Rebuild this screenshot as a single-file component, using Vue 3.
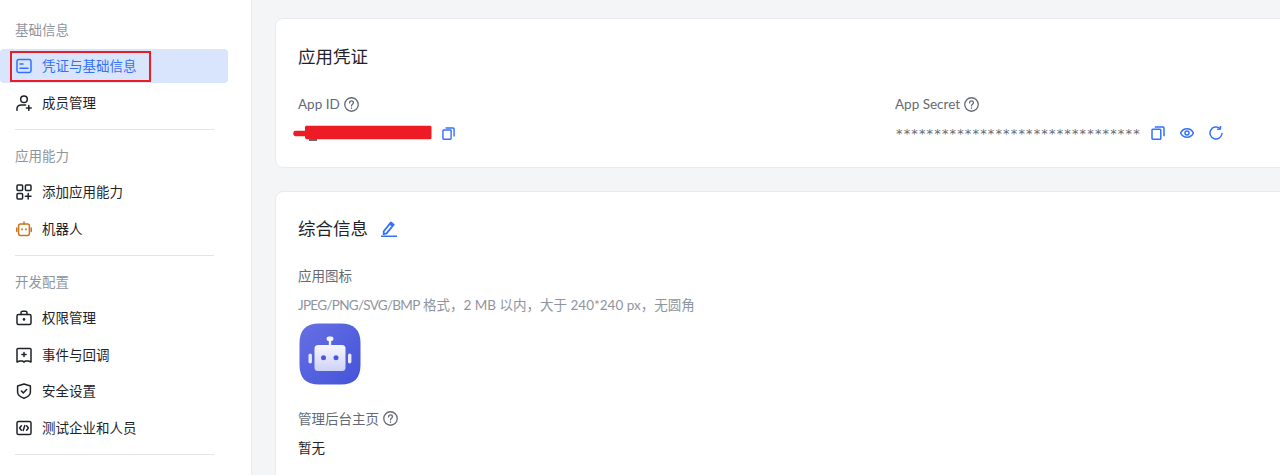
<script setup>
const groups = [
  { title: '基础信息', items: [
    { text: '凭证与基础信息', icon: 'card', active: true },
    { text: '成员管理', icon: 'member' },
  ]},
  { title: '应用能力', items: [
    { text: '添加应用能力', icon: 'apps' },
    { text: '机器人', icon: 'bot' },
  ]},
  { title: '开发配置', items: [
    { text: '权限管理', icon: 'lock' },
    { text: '事件与回调', icon: 'event' },
    { text: '安全设置', icon: 'shield' },
    { text: '测试企业和人员', icon: 'code' },
  ]},
]
</script>

<template>
  <div class="page">
    <aside class="side">
      <section v-for="g in groups" :key="g.title" class="group">
        <div class="group-title">{{ g.title }}</div>
        <div class="items">
          <div v-for="it in g.items" :key="it.text" class="item" :class="{ active: it.active }">
            <svg class="ico" :class="{ orange: it.icon === 'bot' }" viewBox="0 0 16 16" fill="none" stroke="currentColor" stroke-width="1.5" stroke-linejoin="round" stroke-linecap="round">
              <template v-if="it.icon === 'card'">
                <rect x="1" y="1.6" width="14" height="12.8" rx="1.6" />
                <path d="M4 6h3M4 10.300h8" />
              </template>
              <template v-else-if="it.icon === 'member'">
                <circle cx="8" cy="4.300" r="3.300" />
                <path d="M1 15.300v-1.500C1 11.400 3 10 5.400 10h4.200M12.800 10.600v4.800M10.400 13h4.800" />
              </template>
              <template v-else-if="it.icon === 'apps'">
                <rect x="1" y="1" width="5.600" height="5.600" rx="1" />
                <rect x="9.400" y="1" width="5.600" height="5.600" rx="1" />
                <rect x="1" y="9.400" width="5.600" height="5.600" rx="1" />
                <path d="M12.200 9.400v5.600M9.400 12.200h5.600" />
              </template>
              <template v-else-if="it.icon === 'bot'">
                <rect x="2.600" y="3" width="10.800" height="11.400" rx="2" />
                <path d="M8 1v2M.8 7v3.600M15.200 7v3.600" />
                <path d="M6 8.200v.4M10 8.200v.4" stroke-width="1.700" />
              </template>
              <template v-else-if="it.icon === 'lock'">
                <rect x="1" y="4.600" width="14" height="10" rx="1.500" />
                <path d="M5 4.600V2.800C5 1.900 5.700 1.200 6.600 1.200h2.800c.9 0 1.600.7 1.600 1.600v1.800" />
                <circle cx="8" cy="9.400" r=".6" fill="currentColor" />
              </template>
              <template v-else-if="it.icon === 'event'">
                <path d="M1 2.400C1 1.900 1.500 1.400 2 1.400h12c.5 0 1 .5 1 1V15l-2.600-1H9.600L8 15l-1.600-1H3.600L1 15z" />
                <path d="M8 5.400v4.200M5.900 7.500h4.200" />
              </template>
              <template v-else-if="it.icon === 'shield'">
                <path d="M8 1l6.400 2v6.200c0 3-3.600 5-6.400 6-2.800-1-6.400-3-6.400-6V3z" />
                <path d="M5.400 8l1.900 1.900 3.300-3.400" />
              </template>
              <template v-else>
                <rect x="1" y="1.400" width="14" height="13.200" rx="1.600" />
                <path d="M5.400 5.800L3.600 8l1.800 2.200M10.600 5.800L12.400 8l-1.800 2.200M8.800 5.600L7.200 10.400" />
              </template>
            </svg>
            <span class="item-text">{{ it.text }}</span>
          </div>
        </div>
        <div class="rule"></div>
      </section>
      <div class="annot"></div>
    </aside>

    <main class="main">
      <section class="card cred">
        <h2>应用凭证</h2>
        <div class="cols">
          <div class="col">
            <div class="label">App ID
              <svg class="help" viewBox="0 0 14 14" fill="none" stroke="currentColor" stroke-width="1.2" stroke-linecap="round"><circle cx="7" cy="7" r="6.300" /><path d="M5.200 5.500C5.200 4.400 6 3.700 7 3.700s1.800.7 1.800 1.700c0 1.400-1.800 1.400-1.800 2.900" /><path d="M7 10.200v.3" /></svg>
            </div>
            <div class="value">
              <svg class="scrib" width="140" height="17" viewBox="-2 0 140 17">
                <rect x="15" y="13" width="8" height="3" fill="#646a73" />
                <path fill="#ed1c24" d="M11 2.500C11 1 12 .8 13 .8h123c1 0 1.500.7 1.500 1.700v10c0 1-.5 1.700-1.500 1.700H13c-1 0-2-.7-2-1.700v-1.300H1.500C-1.500 11.200-1.500 5.800 1.500 5.800H11z" />
              </svg>
              <svg class="act" viewBox="0 0 14 14" fill="none" stroke="currentColor" stroke-width="1.500" stroke-linejoin="round"><rect x="1" y="3.300" width="8.800" height="9.900" rx=".8" /><path d="M3.800 1h8.200c.6 0 1 .4 1 1v8.300" /></svg>
            </div>
          </div>
          <div class="col">
            <div class="label">App Secret
              <svg class="help" viewBox="0 0 14 14" fill="none" stroke="currentColor" stroke-width="1.2" stroke-linecap="round"><circle cx="7" cy="7" r="6.300" /><path d="M5.200 5.500C5.200 4.400 6 3.700 7 3.700s1.800.7 1.800 1.700c0 1.400-1.800 1.400-1.800 2.900" /><path d="M7 10.200v.3" /></svg>
            </div>
            <div class="value secret">
              <span class="stars">********************************</span>
              <svg class="act" viewBox="0 0 14 14" fill="none" stroke="currentColor" stroke-width="1.500" stroke-linejoin="round"><rect x="1" y="3.300" width="8.800" height="9.900" rx=".8" /><path d="M3.800 1h8.200c.6 0 1 .4 1 1v8.300" /></svg>
              <svg class="act" viewBox="0 0 14 14" fill="none" stroke="currentColor" stroke-width="1.500"><path d="M.6 7C2 4.200 4.300 2.800 7 2.800s5 1.400 6.400 4.200c-1.400 2.800-3.700 4.200-6.400 4.200S2 9.800.6 7z" /><circle cx="7" cy="7" r="2" /></svg>
              <svg class="act" viewBox="0 0 14 14" fill="none" stroke="currentColor" stroke-width="1.500" stroke-linecap="round" stroke-linejoin="round"><path d="M13 7.500A6 6 0 1 1 11 2.500" /><path d="M11.500 .4L11.300 3.100 8.600 3.200" /></svg>
            </div>
          </div>
        </div>
      </section>

      <section class="card info">
        <h2 class="info-title">综合信息
          <svg class="edit" viewBox="0 0 16 16" fill="none" stroke="currentColor" stroke-width="1.800" stroke-linejoin="round" stroke-linecap="round"><path d="M2.800 10.300L9.900 1.400l2.800 2.200-7.100 8.800-3 .8zM8.800 2.800l2.800 2.200" /><path d="M.3 15.300h15.400" /></svg>
        </h2>
        <div class="label plain">应用图标</div>
        <div class="hint"><span class="hint-fmt">JPEG/PNG/SVG/BMP</span> 格式，2 MB 以内，大于 240*240 px，无圆角</div>
        <div class="logo">
          <svg width="62" height="62" viewBox="0 0 62 62">
            <defs>
              <linearGradient id="lg" x1="0" y1="0" x2="1" y2="1"><stop offset="0" stop-color="#6670e4" /><stop offset="1" stop-color="#4453d8" /></linearGradient>
              <linearGradient id="lf" x1="0" y1="0" x2="0" y2="1"><stop offset="0" stop-color="#f6f7fe" /><stop offset="1" stop-color="#cdd2f7" /></linearGradient>
            </defs>
            <path fill="url(#lg)" d="M20 .5h22c13 0 19.500 6.500 19.500 19.500v22c0 13-6.500 19.500-19.500 19.500H20C7 61.500 .5 55 .5 42V20C.5 7 7 .5 20 .5z" />
            <rect x="15.500" y="22" width="31" height="26" rx="3.500" fill="url(#lf)" />
            <rect x="29.800" y="16" width="2.400" height="7" fill="#eef0fd" />
            <rect x="27.500" y="13.500" width="7" height="4.500" rx="2.200" fill="#f3f4fe" />
            <rect x="9.500" y="30.500" width="3.400" height="10" rx="1.700" fill="#e8eafb" />
            <rect x="49" y="30.500" width="3.400" height="10" rx="1.700" fill="#e8eafb" />
            <circle cx="24.500" cy="34.800" r="2.500" fill="#4a59dc" />
            <circle cx="37" cy="34.800" r="2.500" fill="#4a59dc" />
          </svg>
        </div>
        <div class="label home">管理后台主页
          <svg class="help" viewBox="0 0 14 14" fill="none" stroke="currentColor" stroke-width="1.2" stroke-linecap="round"><circle cx="7" cy="7" r="6.300" /><path d="M5.200 5.500C5.200 4.400 6 3.700 7 3.700s1.800.7 1.800 1.700c0 1.400-1.800 1.400-1.800 2.900" /><path d="M7 10.200v.3" /></svg>
        </div>
        <div class="none">暂无</div>
      </section>
    </main>
  </div>
</template>

<style>
html, body { margin: 0; overflow: hidden; background: #f4f5f6; }
</style>

<style scoped>
.page {
  display: flex;
  width: 1280px;
  height: 475px;
  overflow: hidden;
  font-family: Lato, "Noto Sans CJK SC", sans-serif;
  font-size: 13.5px;
  color: #1f2329;
  background: #f4f5f7;
}
.side {
  position: relative;
  flex: none;
  box-sizing: border-box;
  width: 252px;
  padding-top: 19px;
  background: #fff;
  border-right: 1px solid #e8eaed;
}
.group-title {
  height: 22px;
  line-height: 22px;
  margin: 0 0 8px 15px;
  color: #8f959e;
}
.items { display: flex; flex-direction: column; gap: 2.5px; }
.item {
  display: flex;
  align-items: center;
  gap: 10px;
  width: 228px;
  height: 34px;
  box-sizing: border-box;
  padding-left: 16px;
  border-radius: 4px;
}
.item-text { position: relative; top: -1px; }
.item.active { background: #d9e5fc; color: #3370ff; }
.ico { flex: none; width: 16px; height: 16px; }
.ico.orange { color: #c8751c; }
.rule { height: 1px; width: 199px; margin: 9px 0 15.5px 15px; background: #e3e4e6; }
.annot {
  position: absolute;
  left: 10px;
  top: 51px;
  width: 141px;
  height: 31px;
  box-sizing: border-box;
  border: 2.5px solid #ed1c24;
}
.main {
  flex: 1;
  min-width: 0;
  padding: 18px 0 0 23px;
  display: flex;
  flex-direction: column;
  gap: 23px;
}
.card {
  flex: none;
  box-sizing: border-box;
  width: 1040px;
  background: #fff;
  border: 1px solid #e8eaed;
  border-radius: 8px;
  padding-left: 22px;
}
.cred { height: 150px; padding-top: 24px; }
h2 { margin: 0; font-size: 17.5px; font-weight: 400; line-height: 28px; color: #1f2329; }
.cols { display: flex; margin-top: 22px; }
.col { flex: none; width: 597px; }
.label { display: flex; align-items: center; gap: 4px; height: 22px; color: #646a73; }
.help { width: 15px; height: 15px; color: #646a73; }
.value { display: flex; align-items: center; height: 22px; margin-top: 7px; }
.scrib { margin-left: -6px; flex: none; }
.act { flex: none; width: 13px; height: 13px; color: #3370ff; margin-left: 10px; }
.secret .act { width: 14px; height: 14px; margin-left: 15px; }
.stars { color: #646a73; font-family: "DejaVu Sans", sans-serif; font-size: 13px; letter-spacing: 1.15px; width: 246px; padding-left: 1px; box-sizing: border-box; white-space: nowrap; }
.secret .stars + .act { margin-left: 10px; }
.info { height: 300px; padding-top: 23px; }
.info-title { display: flex; align-items: center; gap: 13px; }
.edit { width: 16px; height: 16px; color: #3370ff; }
.plain { margin-top: 21px; }
.hint { height: 22px; line-height: 22px; margin-top: 8px; color: #8f959e; white-space: nowrap; }
.hint-fmt { letter-spacing: -.72px; }
.logo { display: flex; margin-top: 7px; margin-left: 1px; }
.home { margin-top: 22px; }
.none { height: 22px; line-height: 22px; margin-top: 8px; }
</style>
